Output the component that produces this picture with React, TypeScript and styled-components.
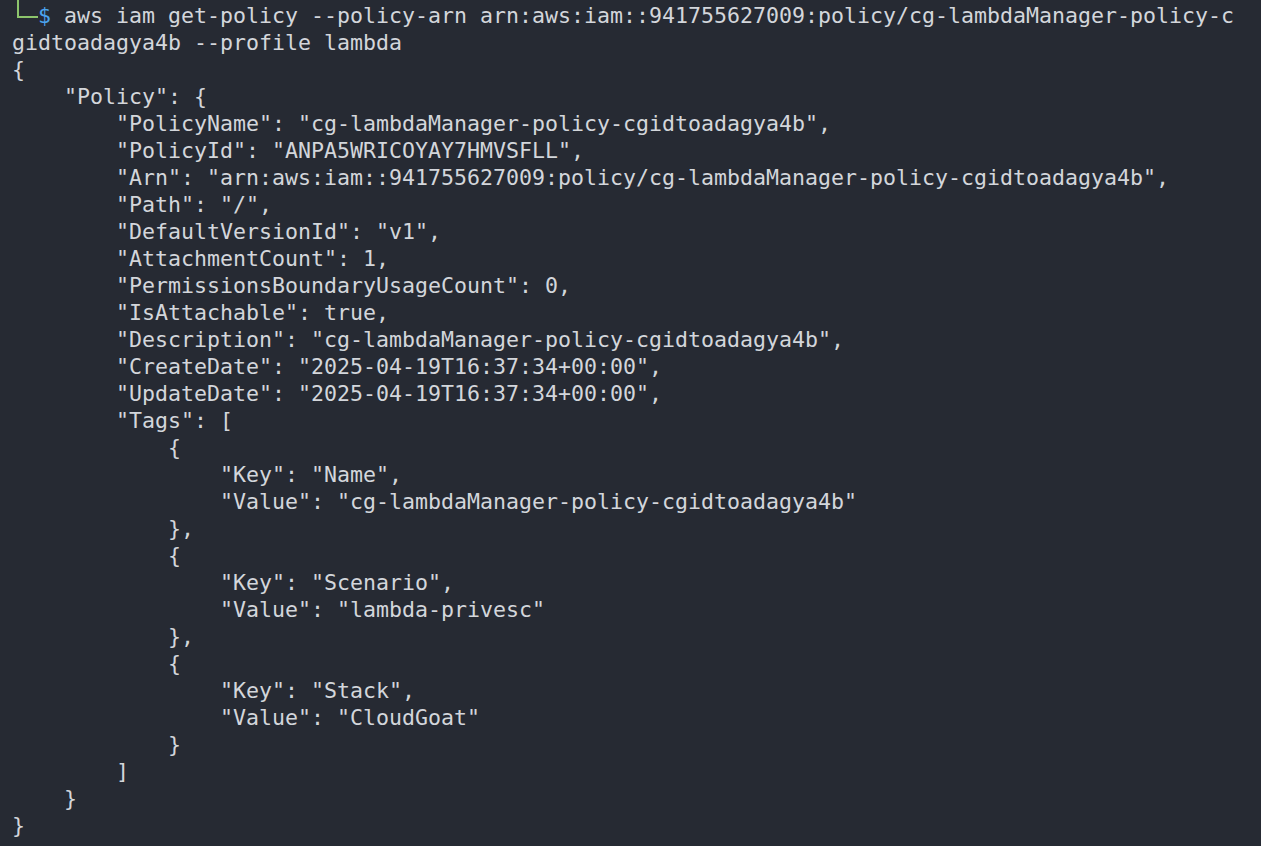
import React from "react";
import styled, { createGlobalStyle } from "styled-components";

const Global = createGlobalStyle`
  html, body {
    margin: 0;
    padding: 0;
    background: #262a33;
    overflow: hidden;
  }
  #root { height: 846px; }
`;

const Terminal = styled.div`
  width: 1261px;
  height: 846px;
  box-sizing: border-box;
  background: #262a33;
  color: #d3d6db;
  font-family: "DejaVu Sans Mono", "Liberation Mono", monospace;
  font-size: 21.6px;
  line-height: 27px;
  padding: 2px 0 0 12px;
  overflow: hidden;
  display: flex;
  flex-direction: column;
`;

const Line = styled.div`
  white-space: pre;
  height: 27px;
`;

/* the "└─" prompt corner that joins the line above */
const PromptCorner = styled.span`
  display: inline-block;
  box-sizing: border-box;
  width: 21px;
  height: 18px;
  margin: -2px 0 0 5px;
  vertical-align: top;
  border-left: 2px solid #8cc46c;
  border-bottom: 2px solid #8cc46c;
`;

const Blue = styled.span`
  color: #4ba3ee;
`;

const json: string[] = [
  "{",
  '    "Policy": {',
  '        "PolicyName": "cg-lambdaManager-policy-cgidtoadagya4b",',
  '        "PolicyId": "ANPA5WRICOYAY7HMVSFLL",',
  '        "Arn": "arn:aws:iam::941755627009:policy/cg-lambdaManager-policy-cgidtoadagya4b",',
  '        "Path": "/",',
  '        "DefaultVersionId": "v1",',
  '        "AttachmentCount": 1,',
  '        "PermissionsBoundaryUsageCount": 0,',
  '        "IsAttachable": true,',
  '        "Description": "cg-lambdaManager-policy-cgidtoadagya4b",',
  '        "CreateDate": "2025-04-19T16:37:34+00:00",',
  '        "UpdateDate": "2025-04-19T16:37:34+00:00",',
  '        "Tags": [',
  "            {",
  '                "Key": "Name",',
  '                "Value": "cg-lambdaManager-policy-cgidtoadagya4b"',
  "            },",
  "            {",
  '                "Key": "Scenario",',
  '                "Value": "lambda-privesc"',
  "            },",
  "            {",
  '                "Key": "Stack",',
  '                "Value": "CloudGoat"',
  "            }",
  "        ]",
  "    }",
  "}",
];

export default function App() {
  return (
    <>
      <Global />
      <Terminal>
        <Line>
          <PromptCorner aria-hidden="true" />
          <Blue>$</Blue>
          {" aws iam get-policy --policy-arn arn:aws:iam::941755627009:policy/cg-lambdaManager-policy-c"}
        </Line>
        <Line>gidtoadagya4b --profile lambda</Line>
        {json.map((l, i) => (
          <Line key={i}>{l}</Line>
        ))}
      </Terminal>
    </>
  );
}
